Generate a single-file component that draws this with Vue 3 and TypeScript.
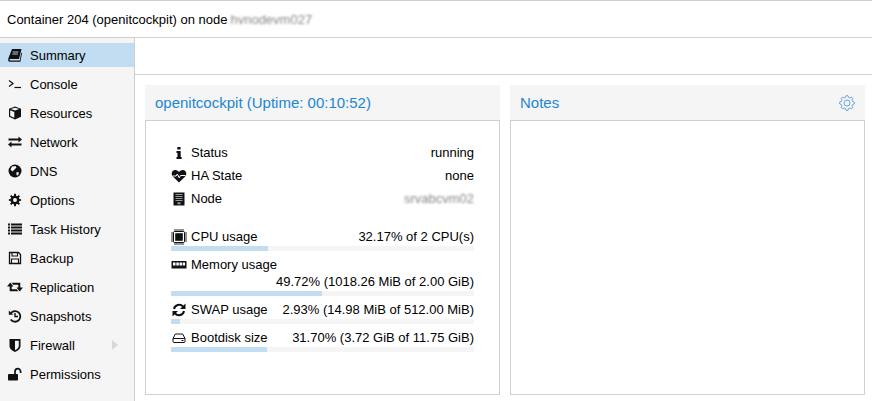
<script setup lang="ts">
const nav = [
  { key: 'book', label: 'Summary', active: true },
  { key: 'console', label: 'Console' },
  { key: 'cube', label: 'Resources' },
  { key: 'exchange', label: 'Network' },
  { key: 'globe', label: 'DNS' },
  { key: 'gear', label: 'Options' },
  { key: 'list', label: 'Task History' },
  { key: 'floppy', label: 'Backup' },
  { key: 'retweet', label: 'Replication' },
  { key: 'history', label: 'Snapshots' },
  { key: 'shield', label: 'Firewall', arrow: true },
  { key: 'unlock', label: 'Permissions' },
]
const info = [
  { key: 'info', label: 'Status', value: 'running' },
  { key: 'heart', label: 'HA State', value: 'none' },
  { key: 'server', label: 'Node', value: 'srvabcvm02', blur: true },
]
const meters = [
  { key: 'cpu', label: 'CPU usage', value: '32.17% of 2 CPU(s)', pct: 32.17 },
  { key: 'memory', label: 'Memory usage', value: '49.72% (1018.26 MiB of 2.00 GiB)', pct: 49.72 },
  { key: 'refresh', label: 'SWAP usage', value: '2.93% (14.98 MiB of 512.00 MiB)', pct: 2.93 },
  { key: 'hdd', label: 'Bootdisk size', value: '31.70% (3.72 GiB of 11.75 GiB)', pct: 31.7 },
]

function gearPath(teeth: number, outer: number, inner: number): string {
  const pts: string[] = []
  const step = (Math.PI * 2) / teeth
  for (let i = 0; i < teeth; i++) {
    const a = i * step
    const seq: [number, number][] = [
      [inner, a - step * 0.32],
      [outer, a - step * 0.17],
      [outer, a + step * 0.17],
      [inner, a + step * 0.32],
    ]
    for (const [r, t] of seq) {
      pts.push(`${(8 + r * Math.sin(t)).toFixed(2)} ${(8 - r * Math.cos(t)).toFixed(2)}`)
    }
  }
  return 'M' + pts.join('L') + 'Z'
}
const solidGear = gearPath(8, 6.2, 4.5)
const outlineGear = gearPath(8, 7.4, 5.8)
</script>

<template>
  <div class="page">
    <header class="top">
      <span>Container 204 (openitcockpit) on node</span>
      <span class="blurred">hvnodevm027</span>
    </header>
    <div class="main">
      <nav class="side">
        <div v-for="n in nav" :key="n.label" class="nav-row" :class="{ active: n.active }">
          <span class="nav-icon">
            <svg viewBox="0 0 16 16" width="16" height="16">
              <template v-if="n.key === 'book'">
                <path d="M5 2h9.500l-2.500 10H3.200c-.9 0-.9 1.600 0 1.600h9.600l1.400-8 .8.6-1.600 8.600H3C1 14.800 .8 12.800 1.500 11z" fill="#111" />
                <path d="M5.800 5h5.600M5.300 7h5.600" stroke="#c2ddf2" stroke-width=".9" />
              </template>
              <template v-else-if="n.key === 'console'">
                <path d="M2 4.500l4 3-4 3" fill="none" stroke="#111" stroke-width="1.200" />
                <path d="M7.500 11.500h6.500" stroke="#111" stroke-width="1.200" />
              </template>
              <template v-else-if="n.key === 'cube'">
                <path d="M8 1.500l6 2.300v8L8 14.500l-6-2.700v-8z" fill="#111" />
                <path d="M3.800 4L8 2.700 12.200 4 8 5.600z" fill="#f5f5f5" />
                <path d="M3.200 5.300l4.100 1.600v5.900l-4.100-1.800z" fill="#f5f5f5" />
              </template>
              <template v-else-if="n.key === 'exchange'">
                <path d="M1.500 4.500h10V2.500L15 5.500l-3.500 3v-2h-10z" fill="#111" />
                <path d="M14.500 9.500h-10v-2L1 10.500l3.500 3v-2h10z" fill="#111" />
              </template>
              <template v-else-if="n.key === 'globe'">
                <circle cx="8" cy="8" r="6.500" fill="#111" />
                <path d="M5 3.500l3.500-.5 1 1.500-2 2-2 2-2-2zM9.500 9l2.500.5-1 3-1.500-.5z" fill="#f5f5f5" />
              </template>
              <template v-else-if="n.key === 'gear'">
                <path :d="solidGear" fill="#111" />
                <circle cx="8" cy="8" r="2" fill="#f5f5f5" />
              </template>
              <template v-else-if="n.key === 'list'">
                <path d="M1 3.500h2M4 3.500h11M1 6.500h2M4 6.500h11M1 9.500h2M4 9.500h11M1 12.500h2M4 12.500h11" stroke="#111" stroke-width="2" />
              </template>
              <template v-else-if="n.key === 'floppy'">
                <path d="M2.500 2.500h9l2 2v9h-11z" fill="none" stroke="#111" stroke-width="1.300" />
                <path d="M5 2.500h5.500v3.500H5zM4.500 9h7v4.500h-7z" fill="none" stroke="#111" stroke-width="1.100" />
              </template>
              <template v-else-if="n.key === 'retweet'">
                <path d="M0 7.500L3.200 3.500l3.300 4H4.700v2.800h5.100l1.700 2H2.700V7.500z" fill="#111" />
                <path d="M16 8.500l-3.200 4-3.300-4h1.800V5.700H6.200l-1.700-2h8.800v4.800z" fill="#111" />
              </template>
              <template v-else-if="n.key === 'history'">
                <path d="M4 5A5.300 5.300 0 1 1 3.700 11.500" fill="none" stroke="#111" stroke-width="1.800" />
                <path d="M1.800 2.500l4.600 4.200H1.800z" fill="#111" />
                <path d="M8 5v3.500h3" fill="none" stroke="#111" stroke-width="1.400" />
              </template>
              <template v-else-if="n.key === 'shield'">
                <path d="M2.500 2h11v7c0 3-3 5-5.500 6-2.500-1-5.500-3-5.500-6z" fill="#111" />
                <path d="M8 3.700h3.800v5.300c0 2-2 3.300-3.800 4.200z" fill="#f5f5f5" />
              </template>
              <template v-else-if="n.key === 'unlock'">
                <rect x="1" y="8" width="10" height="6.500" rx=".8" fill="#111" />
                <path d="M8 8.500V5.500a2.800 2.800 0 0 1 5.600 0V7" fill="none" stroke="#111" stroke-width="1.700" />
              </template>
            </svg>
          </span>
          <span>{{ n.label }}</span>
          <span v-if="n.arrow" class="arrow"></span>
        </div>
      </nav>
      <div class="content">
        <div class="toolbar"></div>
        <div class="panels">
          <section class="panel">
            <h2 class="head">openitcockpit (Uptime: 00:10:52)</h2>
            <div class="body">
              <div v-for="r in info" :key="r.label" class="info-row">
                <span class="small-icon">
                  <svg viewBox="0 0 16 16" width="16" height="16">
                    <template v-if="r.key === 'info'">
                      <path d="M6.300 2h3.300v2.500H6.300zM5.500 6h4.200v6h1v2H5.500v-2h1V8h-1z" fill="#111" />
                    </template>
                    <template v-else-if="r.key === 'heart'">
                      <path d="M8 14.500L1.800 8.500C-.5 5.800 1 2 4.300 2c1.700 0 3 1 3.700 2 .7-1 2-2 3.700-2 3.300 0 4.800 3.800 2.500 6.500z" fill="#111" />
                      <path d="M1.500 8h3.700l1.200-2 1.800 3.800 1.300-2.300h5" fill="none" stroke="#fff" stroke-width="1" />
                    </template>
                    <template v-else>
                      <path d="M2.500 1.500h11v13h-11z" fill="#111" />
                      <path d="M4.500 3.500h7M4.500 5.500h7M4.500 7.500h7M4.500 9.500h7" stroke="#999" stroke-width="1" />
                      <rect x="6.500" y="11.300" width="3" height="2" fill="#999" />
                    </template>
                  </svg>
                </span>
                <span>{{ r.label }}</span>
                <span class="value" :class="{ blurred: r.blur }">{{ r.value }}</span>
              </div>
              <div class="meters">
                <div v-for="m in meters" :key="m.label" class="meter">
                  <div class="meter-head">
                    <span class="meter-label">
                      <span class="small-icon">
                        <svg viewBox="0 0 16 16" width="16" height="16">
                          <template v-if="m.key === 'cpu'">
                            <rect x="2.500" y="2.500" width="11" height="11" rx="1" fill="#fff" stroke="#111" />
                            <rect x="4.200" y="4.200" width="7.600" height="7.600" fill="#111" />
                            <path d="M4 0v2.500M6 0v2.500M8 0v2.500M10 0v2.500M12 0v2.500M4 13.500V16M6 13.500V16M8 13.500V16M10 13.500V16M12 13.500V16M0 4h2.500M0 6h2.500M0 8h2.500M0 10h2.500M0 12h2.500M13.500 4H16M13.500 6H16M13.500 8H16M13.500 10H16M13.500 12H16" stroke="#111" stroke-width=".9" />
                          </template>
                          <template v-else-if="m.key === 'memory'">
                            <rect x=".5" y="4" width="15" height="7.500" rx=".5" fill="#111" />
                            <path d="M2 5.500h2.500v3H2zM5.300 5.500h2.500v3H5.300zM8.500 5.500H11v3H8.500zM11.700 5.500h2.300v3h-2.300z" fill="#fff" />
                          </template>
                          <template v-else-if="m.key === 'refresh'">
                            <path d="M3 7a5.200 5.200 0 0 1 9-2.500" fill="none" stroke="#111" stroke-width="2" />
                            <path d="M14.500 1.500v5.500H9z" fill="#111" />
                            <path d="M13 9a5.200 5.200 0 0 1-9 2.500" fill="none" stroke="#111" stroke-width="2" />
                            <path d="M1.500 14.500V9H7z" fill="#111" />
                          </template>
                          <template v-else>
                            <path d="M2 8.500L4.300 4h7.400L14 8.500v3a1 1 0 0 1-1 1H3a1 1 0 0 1-1-1zM2 8.500h12M10.500 10.500h2" fill="none" stroke="#111" stroke-width="1" />
                          </template>
                        </svg>
                      </span>
                      {{ m.label }}
                    </span>
                    <span class="meter-value">{{ m.value }}</span>
                  </div>
                  <div class="track"><div class="fill" :style="{ width: m.pct + '%' }"></div></div>
                </div>
              </div>
            </div>
          </section>
          <section class="panel">
            <h2 class="head notes-head">
              Notes
              <svg class="cog" viewBox="0 0 16 16" width="16" height="16">
                <path :d="outlineGear" fill="none" stroke="#6aa5e0" stroke-width="1" />
                <circle cx="8" cy="8" r="3" fill="none" stroke="#6aa5e0" stroke-width="1" />
              </svg>
            </h2>
            <div class="body"></div>
          </section>
        </div>
      </div>
    </div>
  </div>
</template>

<style scoped>
.page {
  width: 872px;
  height: 401px;
  overflow: hidden;
  display: flex;
  flex-direction: column;
  background: #fff;
  color: #000;
  font-family: "Liberation Sans", Arial, sans-serif;
  font-size: 13px;
  box-sizing: border-box;
  border-top: 1px solid #cfcfcf;
}
.top {
  height: 36px;
  flex: none;
  display: flex;
  align-items: center;
  gap: 3px;
  padding-left: 7px;
  border-bottom: 1px solid #cfcfcf;
}
.blurred {
  color: #888;
  filter: blur(1.300px);
}
.main {
  flex: 1;
  display: flex;
  min-height: 0;
}
.side {
  width: 134px;
  flex: none;
  background: #f5f5f5;
  border-right: 1px solid #cfcfcf;
  padding-top: 5px;
  display: flex;
  flex-direction: column;
  gap: 5px;
}
.nav-row {
  height: 24px;
  display: flex;
  align-items: center;
  position: relative;
}
.nav-row.active {
  background: #c2ddf2;
}
.nav-icon {
  width: 30px;
  display: flex;
  justify-content: center;
  flex: none;
}
.arrow {
  position: absolute;
  left: 112px;
  top: 7px;
  border-left: 6px solid #d8d8d8;
  border-top: 5px solid transparent;
  border-bottom: 5px solid transparent;
}
.content {
  flex: 1;
  display: flex;
  flex-direction: column;
  min-width: 0;
}
.toolbar {
  height: 36px;
  flex: none;
  border-bottom: 1px solid #cfcfcf;
}
.panels {
  flex: 1;
  display: flex;
  gap: 10px;
  padding: 10px 7px 6px 10px;
  min-height: 0;
}
.panel {
  width: 355px;
  flex: none;
  display: flex;
  flex-direction: column;
}
.head {
  margin: 0;
  height: 35px;
  flex: none;
  display: flex;
  align-items: center;
  padding: 0 10px;
  background: #f5f5f5;
  color: #2186d0;
  font-size: 15px;
  font-weight: normal;
  border-bottom: 1px solid #cfcfcf;
}
.notes-head {
  justify-content: space-between;
  padding-right: 10px;
}
.body {
  flex: 1;
  border: 1px solid #cfcfcf;
  border-top: 0;
  padding: 20px 25px 0;
}
.info-row {
  height: 23px;
  display: flex;
  align-items: center;
}
.small-icon {
  width: 20px;
  flex: none;
  display: inline-flex;
  align-items: center;
}
.value {
  margin-left: auto;
}
.meters {
  margin-top: 19px;
  display: flex;
  flex-direction: column;
  gap: 6px;
}
.meter-head {
  display: flex;
  flex-wrap: wrap;
  row-gap: 1px;
  line-height: 16px;
}
.meter-label {
  display: inline-flex;
  align-items: center;
  height: 16px;
}
.meter-value {
  margin-left: auto;
}
.track {
  height: 5px;
  margin-top: 1px;
  background: #f5f5f5;
}
.fill {
  height: 100%;
  background: #c2ddf2;
}
</style>
